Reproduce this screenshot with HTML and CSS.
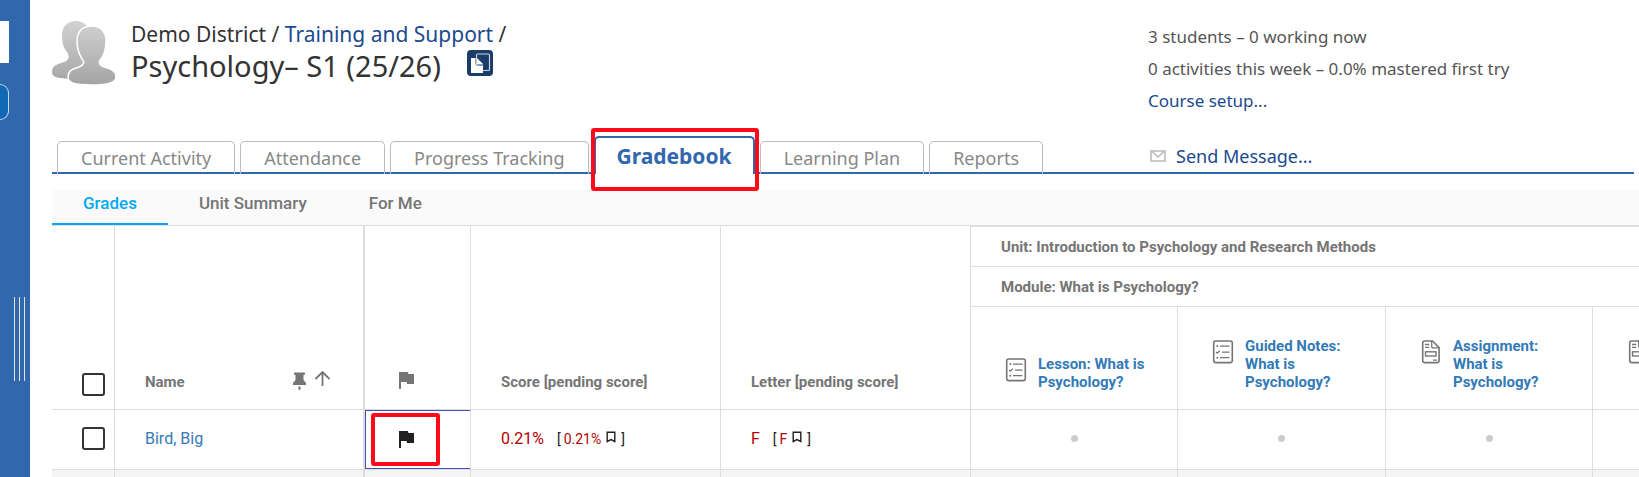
FILE: index.html
```html
<!DOCTYPE html>
<html lang="en">
<head>
    <meta charset="UTF-8">
    <meta name="viewport" content="width=device-width, initial-scale=1.0">
    <title>Gradebook</title>
    <link rel="stylesheet" href="styles.css">
</head>
<body>
    <!-- icons used more than once -->
    <svg class="sprite" aria-hidden="true">
        <symbol id="flag" viewBox="0 0 24 24">
            <path d="M14.4 6L14 4H5v17h2v-7h5.6l.4 2h7V6z"/>
        </symbol>
        <symbol id="bookmark" viewBox="0 0 10 12">
            <path d="M1.2 1.2h7.6v9.3L5 8.6l-3.8 1.9z" fill="none" stroke="currentColor" stroke-width="1.4"/>
        </symbol>
        <symbol id="checklist" viewBox="0 0 30 24">
            <g fill="none" stroke="currentColor" stroke-width="1.6">
                <rect x="5.7" y="1" width="18.6" height="21.6" rx="2"/>
                <path d="M12 6.1h9.5M14 12.1h7.5M12 17.7h9.5" stroke-width="1.3"/>
                <path d="M8 12l1.3 1.2 2.5-2.5" stroke-width="1.3"/>
            </g>
            <circle cx="9.3" cy="6.1" r="1" fill="currentColor"/>
            <circle cx="9.3" cy="17.7" r="1" fill="currentColor"/>
        </symbol>
        <symbol id="document" viewBox="0 0 30 24">
            <g fill="none" stroke="currentColor" stroke-width="1.6">
                <path d="M8.7 1h7.8l6.6 6.6v13a2 2 0 0 1-2 2H8.7a2 2 0 0 1-2-2V3a2 2 0 0 1 2-2z"/>
                <path d="M15.7 1v5.4a1.5 1.5 0 0 0 1.5 1.5h5.5" stroke-width="1.3"/>
                <path d="M9 4.5h4.3M9 7.3h4.3M17 20.2h4" stroke-width="1.3"/>
                <rect x="9.5" y="11.8" width="10.5" height="4.2" stroke-width="1.4"/>
            </g>
        </symbol>
    </svg>

    <div class="app">
        <aside class="sidebar">
            <div class="side-box"></div>
            <button type="button" class="side-button" aria-label="Menu"></button>
            <div class="grip"></div>
        </aside>

        <main class="main">
            <header class="header">
                <div class="course">
                    <svg class="avatar" viewBox="0 0 64 64" aria-hidden="true">
                        <defs>
                            <linearGradient id="grey" x1="0" y1="0" x2="0" y2="64" gradientUnits="userSpaceOnUse">
                                <stop offset="0" stop-color="#d2d2d2"/>
                                <stop offset="1" stop-color="#a4a4a4"/>
                            </linearGradient>
                        </defs>
                        <path fill="url(#grey)" d="M24 0c8 0 13.5 5 13.5 14 0 8-1 13-5 18-3 4-1 7 3 9 6 2 12 3 12 10 0 5-6 7-24 7S0 56 0 51c0-7 6-8 12-10 5-2 6-6 3-10-3-4-5-8-5-17C10 5 16 0 24 0z"/>
                        <path fill="url(#grey)" stroke="#fff" stroke-width="1.5" d="M39.5 5C48 5 54 10 54 20c0 9-2 14-5 18-3 3-2 6 3 8 6 2 12 3 12 10 0 5-6 8-24 8s-24-2-24-8c0-7 5-8 11-10 5-2 6-5 3-8-3-5-5-9-5-18C25 10 31 5 39.5 5z"/>
                    </svg>
                    <div class="course-text">
                        <div class="crumbs">Demo District / <a href="#">Training and Support</a> /</div>
                        <div class="title-row">
                            <h1>Psychology– S1 (25/26)</h1>
                            <button type="button" class="copy" aria-label="Copy">
                                <svg viewBox="0 0 26 26" aria-hidden="true">
                                    <rect x="9.5" y="4" width="13" height="16.5" rx="1" fill="none" stroke="#c9d3e0" stroke-width="1.2"/>
                                    <path d="M4 8h4.5v6a1.5 1.5 0 0 0 1.5 1.5h6V23H4z" fill="#fff"/>
                                    <path d="M10 8l6.5 6.5H10z" fill="#fff"/>
                                </svg>
                            </button>
                        </div>
                    </div>
                </div>
                <div class="info">
                    <p>3 students – 0 working now</p>
                    <p>0 activities this week – 0.0% mastered first try</p>
                    <p><a href="#">Course setup...</a></p>
                </div>
            </header>

            <div class="tab-bar">
                <nav class="tabs">
                    <a href="#" class="tab">Current Activity</a>
                    <a href="#" class="tab">Attendance</a>
                    <a href="#" class="tab">Progress Tracking</a>
                    <a href="#" class="tab active">Gradebook<span class="mark mark-tab"></span></a>
                    <a href="#" class="tab">Learning Plan</a>
                    <a href="#" class="tab">Reports</a>
                </nav>
                <a href="#" class="message">
                    <svg viewBox="0 0 16 12" aria-hidden="true">
                        <path d="M1 1h14v10H1zM2 1.5l6 5.5 6-5.5" fill="none" stroke="#bbb" stroke-width="1.6"/>
                    </svg>
                    Send Message...
                </a>
            </div>

            <nav class="subnav">
                <a href="#" class="current">Grades</a>
                <a href="#">Unit Summary</a>
                <a href="#">For Me</a>
            </nav>

            <div class="grid">
                <table class="grades">
                    <colgroup>
                        <col class="col-check">
                        <col class="col-wide">
                        <col class="col-flag">
                        <col class="col-wide">
                        <col class="col-wide">
                        <col class="col-item">
                        <col class="col-item-wide">
                        <col class="col-item">
                        <col class="col-item-wide">
                    </colgroup>
                    <thead>
                        <tr class="unit">
                            <th rowspan="3" class="check"><input type="checkbox" aria-label="Select all"></th>
                            <th rowspan="3" class="pinned">
                                <div class="name-head">
                                    <span>Name</span>
                                    <svg class="sort" viewBox="0 0 40 20" aria-hidden="true">
                                        <path d="M2 1.5h11v2l-1.5.5v5l2.5 3v2H1v-2l2.5-3V4L2 3.5zM6.5 15.5h2V18l-1 1.5-1-1.5z" fill="#757575"/>
                                        <path d="M30.5 15V1.5M23.5 8l7-7 7 7" fill="none" stroke="#757575" stroke-width="1.8"/>
                                    </svg>
                                </div>
                            </th>
                            <th rowspan="3" class="flag"><svg class="icon" role="img" aria-label="Flag"><use href="#flag"/></svg></th>
                            <th rowspan="3">Score [pending score]</th>
                            <th rowspan="3">Letter [pending score]</th>
                            <th colspan="4" class="group">Unit: Introduction to Psychology and Research Methods</th>
                        </tr>
                        <tr class="module">
                            <th colspan="4" class="group">Module: What is Psychology?</th>
                        </tr>
                        <tr class="items">
                            <th>
                                <a href="#" class="item"><svg><use href="#checklist"/></svg><span>Lesson: What is Psychology?</span></a>
                            </th>
                            <th>
                                <a href="#" class="item"><svg><use href="#checklist"/></svg><span>Guided Notes: What is Psychology?</span></a>
                            </th>
                            <th>
                                <a href="#" class="item"><svg><use href="#document"/></svg><span>Assignment: What is Psychology?</span></a>
                            </th>
                            <th>
                                <a href="#" class="item"><svg><use href="#document"/></svg><span><br><br><br></span></a>
                            </th>
                        </tr>
                    </thead>
                    <tbody>
                        <tr>
                            <td class="check"><input type="checkbox" aria-label="Select Bird, Big"></td>
                            <td class="pinned"><a href="#">Bird, Big</a></td>
                            <td class="flag selected"><svg class="icon" role="img" aria-label="Flagged"><use href="#flag"/></svg><span class="mark mark-flag"></span></td>
                            <td>
                                <div class="score"><span class="red">0.21%</span><span class="pending">[<span class="red">0.21%</span><svg><use href="#bookmark"/></svg>]</span></div>
                            </td>
                            <td>
                                <div class="score"><span class="red">F</span><span class="pending">[<span class="red">F</span><svg><use href="#bookmark"/></svg>]</span></div>
                            </td>
                            <td><span class="dot"></span></td>
                            <td><span class="dot"></span></td>
                            <td><span class="dot"></span></td>
                            <td><span class="dot"></span></td>
                        </tr>
                        <tr class="alt">
                            <td></td>
                            <td class="pinned"></td>
                            <td></td>
                            <td></td>
                            <td></td>
                            <td></td>
                            <td></td>
                            <td></td>
                            <td></td>
                        </tr>
                    </tbody>
                </table>
            </div>
        </main>
    </div>
</body>
</html>
```
FILE: styles.css
```css
* {
    box-sizing: border-box;
}
body {
    margin: 0;
    background-color: #fff;
    color: #333;
    font-family: "Noto Sans", sans-serif;
}
a {
    color: #1b4a8e;
    text-decoration: none;
}
button {
    padding: 0;
    cursor: pointer;
}
.sprite {
    display: none;
}
.app {
    display: flex;
    height: 100vh;
    overflow: hidden;
}

/* left bar */
.sidebar {
    flex: 0 0 30px;
    padding-top: 21px;
    background-color: #3167ad;
}
.side-box {
    width: 9px;
    height: 42px;
    background-color: #fff;
}
.side-button {
    display: block;
    width: 9px;
    height: 36px;
    margin-top: 21px;
    border: 1px solid #c5d8ec;
    border-left: 0;
    border-radius: 0 9px 9px 0;
    background-color: #1168b3;
}
.grip {
    width: 11px;
    height: 84px;
    margin: 177px 0 0 14px;
    border: solid #e4e4e0;
    border-width: 0 1px;
    background: linear-gradient(#e4e4e0, #e4e4e0) center / 1px 100% no-repeat;
}

.main {
    flex: 1;
    min-width: 0;
    padding-left: 22px;
}

/* course header */
.header {
    display: flex;
    justify-content: space-between;
    height: 128px;
    padding: 21px 5px 0 0;
}
.course {
    display: flex;
    gap: 15px;
}
.avatar {
    width: 64px;
    height: 64px;
}
.crumbs {
    font-size: 21px;
    line-height: 26px;
}
.title-row {
    display: flex;
    align-items: flex-start;
    gap: 26px;
}
h1 {
    margin: 0;
    font-size: 29px;
    font-weight: 400;
    line-height: 38px;
}
.copy {
    width: 26px;
    height: 26px;
    margin-top: 3px;
    border: 0;
    border-radius: 4px;
    background-color: #1a3c69;
}
.copy svg {
    display: block;
}
.info {
    width: 486px;
    color: #555;
    font-size: 17px;
    line-height: 32px;
}
.info p {
    margin: 0;
}

/* main tabs */
.tab-bar {
    display: flex;
    align-items: flex-end;
    justify-content: space-between;
    height: 46px;
    margin-right: 5px;
    border-bottom: 2px solid #3167ad;
}
.tabs {
    display: flex;
    align-items: flex-end;
    gap: 5px;
    margin-bottom: -2px;
    padding-left: 5px;
}
.tab {
    height: 33px;
    padding: 0 23px;
    border: 1px solid #bbb;
    border-bottom: 0;
    border-radius: 5px 5px 0 0;
    color: #888;
    font-size: 18px;
    line-height: 32px;
}
.tab.active {
    position: relative;
    height: 38px;
    padding: 0 21px;
    border: 2px solid #3167ad;
    border-bottom: 0;
    background-color: #fff;
    color: #3167ad;
    font-size: 21px;
    font-weight: 700;
    line-height: 36px;
}
.mark {
    position: absolute;
    border: 4px solid #ff0a18;
    border-radius: 3px;
}
.mark-tab {
    top: -10px;
    right: -6px;
    bottom: -17px;
    left: -5px;
}
.message {
    display: flex;
    align-items: center;
    gap: 10px;
    width: 486px;
    padding-left: 2px;
    font-size: 18px;
    line-height: 32px;
}
.message svg {
    width: 16px;
    height: 12px;
}

/* grades / unit summary / for me */
.subnav {
    display: flex;
    height: 36px;
    margin-top: 16px;
    border-bottom: 1px solid #ddd;
    background-color: #fafafa;
    font-family: Roboto, sans-serif;
    font-size: 17px;
    font-weight: 500;
    line-height: 26px;
}
.subnav a {
    padding: 0 31px;
    color: #757575;
}
.subnav a.current {
    border-bottom: 2px solid #03a9f4;
    color: #03a9f4;
}

/* grade table */
.grid {
    overflow: hidden;
}
.grades {
    width: 1749px;
    border-collapse: separate;
    border-spacing: 0;
    table-layout: fixed;
    font-family: Roboto, sans-serif;
}
.col-check {
    width: 63px;
}
.col-wide {
    width: 250px;
}
.col-flag {
    width: 106px;
}
.col-item {
    width: 207px;
}
.col-item-wide {
    width: 208px;
}
th,
td {
    padding: 0 0 0 30px;
    border: solid #ddd;
    border-width: 0 1px 1px 0;
    text-align: left;
}
th {
    padding-bottom: 18px;
    color: #757575;
    font-size: 15px;
    font-weight: 700;
    line-height: 18px;
    vertical-align: bottom;
}
td {
    height: 60px;
    padding-bottom: 2px;
    font-size: 16px;
    vertical-align: middle;
}
.grades a {
    color: #337ab7;
}
.unit {
    height: 41px;
}
.module {
    height: 40px;
}
.items {
    height: 103px;
}
.group {
    padding-bottom: 0;
    vertical-align: middle;
}
.unit .group {
    border-top: 1px solid #ddd;
}
.pinned {
    border-right-width: 2px;
}
th.check {
    padding-bottom: 13px;
}
input[type="checkbox"] {
    display: block;
    width: 23px;
    height: 23px;
    margin: 0;
    border: 2px solid #333;
    border-radius: 3px;
    appearance: none;
}
.name-head {
    display: flex;
    align-items: flex-end;
    justify-content: space-between;
    height: 20px;
    padding-right: 31px;
}
.sort {
    width: 40px;
    height: 20px;
}
th.flag {
    padding-bottom: 17px;
}
.flag {
    padding-left: 29px;
}
.icon {
    display: block;
    width: 24px;
    height: 24px;
    fill: currentColor;
}
td.flag {
    position: relative;
    color: #212121;
}
.selected {
    background: linear-gradient(#3f51b5, #3f51b5) left / 1px 100% no-repeat,
        linear-gradient(#3f51b5, #3f51b5) top / 100% 1px no-repeat,
        linear-gradient(#3f51b5, #3f51b5) bottom / 100% 1px no-repeat;
    background-clip: padding-box;
}
.mark-flag {
    top: 3px;
    bottom: 3px;
    left: 6px;
    width: 69px;
}
.item {
    display: flex;
    gap: 7px;
    padding-right: 20px;
}
.item svg {
    flex: none;
    width: 30px;
    height: 24px;
    margin-top: 3px;
    color: #757575;
}
.score {
    display: flex;
    align-items: baseline;
    gap: 13px;
}
.pending {
    display: flex;
    gap: 3px;
    color: #212121;
    font-size: 14px;
}
.pending svg {
    width: 10px;
    height: 12px;
    margin: 0 2px;
}
.red {
    color: #b00000;
}
.dot {
    display: block;
    width: 7px;
    height: 7px;
    margin-left: 70px;
    border-radius: 50%;
    background-color: #ccc;
}
.alt {
    background-color: #f5f5f5;
}
```
